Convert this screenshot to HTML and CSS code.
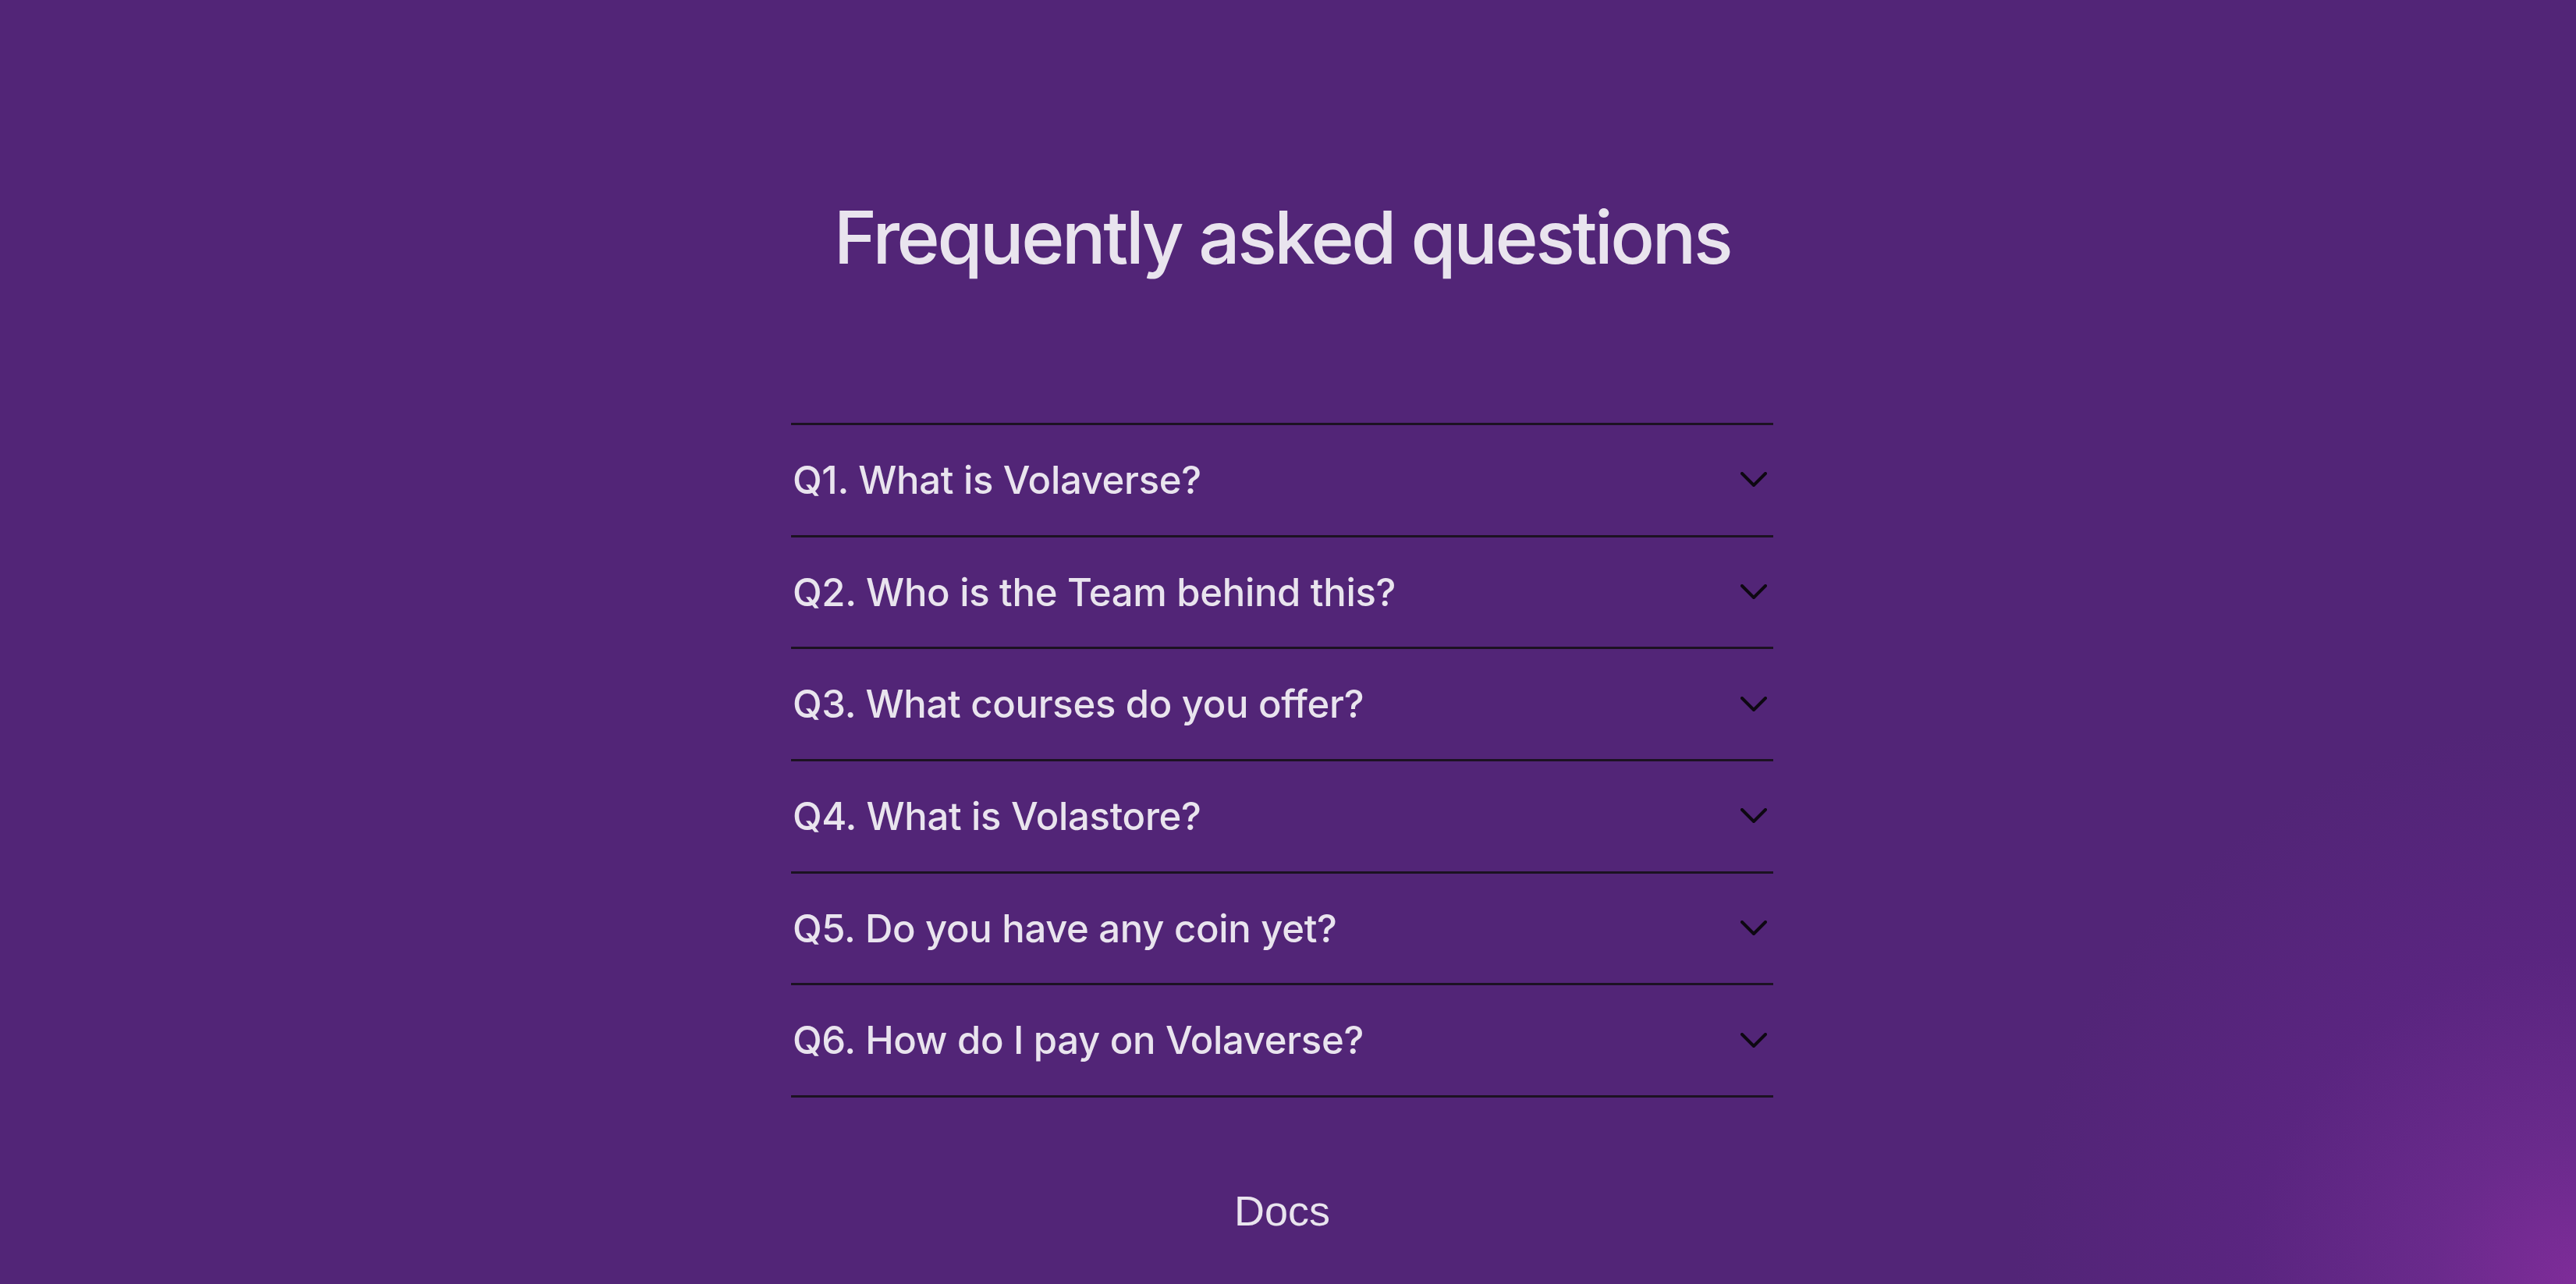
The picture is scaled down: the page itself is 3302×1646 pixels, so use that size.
FILE: index.html
```html
<!DOCTYPE html>
<html lang="en">
<head>
<meta charset="utf-8">
<title>FAQ</title>
<link rel="stylesheet" href="styles.css">
</head>
<body>
<main class="page">
  <h2 class="title">Frequently asked questions</h2>
  <ul class="faq">
    <li class="item"><span class="q">Q1. What is Volaverse?</span><svg class="chev" viewBox="0 0 34 20"><polyline points="2,2 17,17 32,2"/></svg></li>
    <li class="item"><span class="q">Q2. Who is the Team behind this?</span><svg class="chev" viewBox="0 0 34 20"><polyline points="2,2 17,17 32,2"/></svg></li>
    <li class="item"><span class="q">Q3. What courses do you offer?</span><svg class="chev" viewBox="0 0 34 20"><polyline points="2,2 17,17 32,2"/></svg></li>
    <li class="item"><span class="q">Q4. What is Volastore?</span><svg class="chev" viewBox="0 0 34 20"><polyline points="2,2 17,17 32,2"/></svg></li>
    <li class="item"><span class="q">Q5. Do you have any coin yet?</span><svg class="chev" viewBox="0 0 34 20"><polyline points="2,2 17,17 32,2"/></svg></li>
    <li class="item"><span class="q">Q6. How do I pay on Volaverse?</span><svg class="chev" viewBox="0 0 34 20"><polyline points="2,2 17,17 32,2"/></svg></li>
  </ul>
  <a class="docs" href="#">Docs</a>
</main>
</body>
</html>
```
FILE: styles.css
```css
html, body {
  margin: 0;
  padding: 0;
  height: 100%;
}
body {
  background: radial-gradient(circle at 100% 100%, #7e2c99 0, #6a2a8c 180px, #5a2580 420px, #522577 720px) #522577;
  overflow: hidden;
  color: #e9e4ee;
  font-family: Inter, "Noto Sans", sans-serif;
}
.page {
  width: calc(100% - 15px);
  display: flex;
  flex-direction: column;
  align-items: center;
  padding-top: 247px;
}
.title {
  margin: 0;
  font-size: 94px;
  line-height: 114px;
  font-weight: 500;
  letter-spacing: -3.4px;
}
.faq {
  list-style: none;
  margin: 181px 0 0;
  padding: 0;
  width: 1259px;
  border-bottom: 3px solid #1c1222;
}
.item {
  display: flex;
  align-items: center;
  justify-content: space-between;
  height: 140.7px;
  border-top: 3px solid #1c1222;
}
.q {
  font-size: 49px;
  line-height: 59px;
  font-weight: 500;
  padding-left: 2px;
  letter-spacing: -0.3px;
}
.chev {
  width: 34px;
  height: 20px;
  margin-right: 8px;
  fill: none;
  stroke: #0e0812;
  stroke-width: 4;
  stroke-linecap: round;
  stroke-linejoin: round;
}
.docs {
  margin-top: 115px;
  font-family: "Liberation Sans", Arial, sans-serif;
  font-size: 54px;
  line-height: 60px;
  color: #e9e4ee;
  text-decoration: none;
}
```
